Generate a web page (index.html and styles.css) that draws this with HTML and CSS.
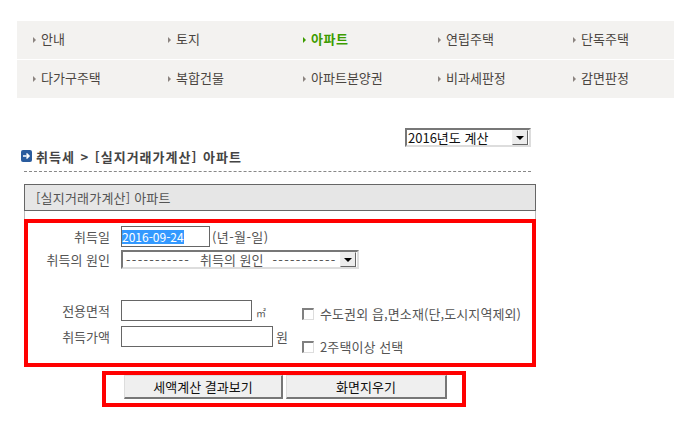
FILE: index.html
```html
<!DOCTYPE html>
<html lang="ko">
<head>
    <meta charset="UTF-8">
    <title>취득세 계산</title>
    <link rel="stylesheet" href="styles.css">
</head>
<body>
    <ul class="menu">
        <li class="menu-item">안내</li>
        <li class="menu-item">토지</li>
        <li class="menu-item active">아파트</li>
        <li class="menu-item">연립주택</li>
        <li class="menu-item">단독주택</li>
        <li class="menu-item">다가구주택</li>
        <li class="menu-item">복합건물</li>
        <li class="menu-item">아파트분양권</li>
        <li class="menu-item">비과세판정</li>
        <li class="menu-item">감면판정</li>
    </ul>

    <div class="content">
        <div class="year-row">
            <div class="combo year-combo">
                <span class="combo-text">2016년도 계산</span>
                <span class="combo-btn"></span>
            </div>
        </div>

        <h2 class="title">
            <svg class="title-icon" width="11" height="12" viewBox="0 0 11 12">
                <rect x="0" y="0" width="11" height="12" rx="2" fill="#2a5c9e"/>
                <path d="M2 6H7.500M5.500 3.500L8 6L5.500 8.500" fill="none" stroke="#fff" stroke-width="1.600"/>
            </svg>
            <span>취득세 &gt; [실지거래가계산] 아파트</span>
        </h2>
        <div class="dashed"></div>

        <div class="panel-head">[실지거래가계산] 아파트</div>
        <div class="panel-gap"></div>

        <form class="form-box">
            <div class="row row-date">
                <label class="row-label">취득일</label>
                <span class="field date-field"><span class="selected">2016-09-24</span></span>
                <span class="hint">(년-월-일)</span>
            </div>
            <div class="row row-cause">
                <label class="row-label">취득의 원인</label>
                <div class="combo cause-combo">
                    <span class="combo-text"><span class="dashes">-----------</span>취득의 원인<span class="dashes dashes-end">-----------</span></span>
                    <span class="combo-btn"></span>
                </div>
            </div>
            <div class="lower">
                <div class="fields">
                    <div class="row row-area">
                        <label class="row-label">전용면적</label>
                        <input class="field area-field" type="text">
                        <span class="unit unit-small">㎡</span>
                    </div>
                    <div class="row">
                        <label class="row-label">취득가액</label>
                        <input class="field price-field" type="text">
                        <span class="unit">원</span>
                    </div>
                </div>
                <div class="checks">
                    <label class="check"><span class="box"></span>수도권외 읍,면소재(단,도시지역제외)</label>
                    <label class="check"><span class="box"></span>2주택이상 선택</label>
                </div>
            </div>
        </form>

        <div class="actions">
            <button class="action action-calc" type="button">세액계산 결과보기</button>
            <button class="action action-clear" type="button">화면지우기</button>
        </div>
    </div>
</body>
</html>
```
FILE: styles.css
```css
html, body {
    overflow: hidden;
}

body {
    margin: 0;
    padding: 0;
    background-color: #fff;
    font-family: "Noto Sans CJK KR", "Noto Sans", sans-serif;
    font-size: 13px;
    line-height: 16px;
    color: #555;
}

.menu {
    display: grid;
    grid-template-columns: repeat(5, 135px);
    grid-auto-rows: 38px;
    row-gap: 1px;
    width: 675px;
    margin: 21px 0 0 17px;
    padding: 0;
    list-style: none;
    background-color: #fff;
}

.menu-item {
    display: flex;
    align-items: center;
    padding: 0 0 2px 16px;
    background-color: #f3f2f0;
    color: #4a4540;
}

.menu-item::before {
    content: "";
    width: 0;
    height: 0;
    margin: 2px 5px 0 0;
    border-left: 3px solid #8c8480;
    border-top: 3px solid transparent;
    border-bottom: 3px solid transparent;
}

.menu-item.active {
    color: #3c9c00;
    font-weight: bold;
    letter-spacing: 0.5px;
}

.menu-item.active::before {
    border-left-color: #3c9c00;
}

.content {
    width: 513px;
    margin-left: 24px;
}

.year-row {
    display: flex;
    justify-content: flex-end;
    height: 19px;
    margin-top: 30px;
    padding-right: 6px;
}

/* windows style dropdown */
.combo {
    display: flex;
    align-items: center;
    box-sizing: border-box;
    height: 19px;
    padding-right: 1px;
    border: 2px solid #777;
    border-right-color: #ddd;
    border-bottom-color: #ddd;
    background-color: #fff;
    color: #111;
    white-space: nowrap;
}

.combo-text {
    flex: 1;
    padding-left: 1px;
    line-height: 15px;
}

.combo-btn {
    display: flex;
    align-items: center;
    justify-content: center;
    flex: none;
    box-sizing: border-box;
    width: 16px;
    height: 15px;
    border: 1px solid #eee;
    border-right-color: #666;
    border-bottom-color: #666;
    background-color: #ececec;
}

.combo-btn::after {
    content: "";
    border-top: 4px solid #000;
    border-left: 4px solid transparent;
    border-right: 4px solid transparent;
}

.year-combo {
    width: 126px;
}

.title {
    display: flex;
    align-items: center;
    height: 14px;
    margin: 3px 0 0 -3px;
    font-size: 13px;
    font-weight: bold;
    letter-spacing: 1px;
    word-spacing: 1px;
    color: #444;
}

.title-icon {
    margin: -2px 4px 0 0;
}

.dashed {
    width: 507px;
    height: 0;
    margin-top: 7px;
    border-top: 1px dashed #888;
}

.panel-head {
    display: flex;
    align-items: center;
    box-sizing: border-box;
    width: 512px;
    height: 27px;
    margin-top: 12px;
    padding-left: 11px;
    border: 1px solid #666;
    background-color: #e6e6e6;
    letter-spacing: 0.2px;
    color: #555;
}

.panel-gap {
    box-sizing: border-box;
    width: 512px;
    height: 8px;
    border-left: 1px solid #bbb;
    border-right: 1px solid #bbb;
}

.form-box {
    box-sizing: border-box;
    width: 512px;
    height: 148px;
    margin: 0;
    padding: 3px 0 0;
    border: 4px solid #f00;
}

.row {
    display: flex;
    align-items: center;
    height: 21px;
}

.row-label {
    box-sizing: border-box;
    width: 82px;
    margin-right: 11px;
    text-align: right;
    white-space: nowrap;
}

.field {
    box-sizing: border-box;
    height: 21px;
    margin: 0;
    padding: 1px;
    border: 1px solid #666;
    background-color: #fff;
    font-family: inherit;
    font-size: 12px;
}

.date-field {
    display: flex;
    align-items: center;
    width: 89px;
    padding: 1px 0;
}

.selected {
    background-color: #3399ff;
    color: #fff;
    line-height: 14px;
}

.hint {
    margin-left: 2px;
    letter-spacing: 0.4px;
}

.row-cause {
    margin-top: 2px;
}

.cause-combo {
    width: 238px;
    color: #555;
}

.cause-combo .combo-text {
    padding-left: 3px;
}

.dashes {
    margin-right: 10px;
    letter-spacing: 1.300px;
}

.dashes-end {
    margin: 0 0 0 9px;
}

.lower {
    display: flex;
    margin-top: 30px;
}

.fields {
    width: 274px;
}

.fields .row + .row {
    margin-top: 5px;
}

.area-field {
    width: 131px;
}

.price-field {
    width: 152px;
}

.unit {
    margin-left: 3px;
}

.unit-small {
    margin-left: 4px;
    font-size: 10px;
    padding-top: 4px;
}

.checks {
    display: flex;
    flex-direction: column;
    padding-top: 7px;
    gap: 20px;
}

.check {
    display: flex;
    align-items: center;
    height: 13px;
    letter-spacing: 0.1px;
    white-space: nowrap;
}

.box {
    box-sizing: border-box;
    width: 12px;
    height: 12px;
    margin-right: 6px;
    border: 2px solid #808080;
    border-right: 1px solid #ddd;
    border-bottom: 1px solid #ddd;
    background-color: #fff;
}

.actions {
    display: flex;
    box-sizing: border-box;
    width: 364px;
    height: 36px;
    margin: 4px 0 0 78px;
    padding: 0 0 0 18px;
    border: 4px solid #f00;
}

.action {
    box-sizing: border-box;
    height: 24px;
    margin: 0;
    padding: 0;
    border: 1px solid #ddd;
    border-right: 2px solid #777;
    border-bottom: 2px solid #777;
    background-color: #efefef;
    font-family: inherit;
    font-size: 13px;
    color: #111;
}

.action-calc {
    width: 159px;
    margin-right: 3px;
}

.action-clear {
    width: 161px;
}
```
